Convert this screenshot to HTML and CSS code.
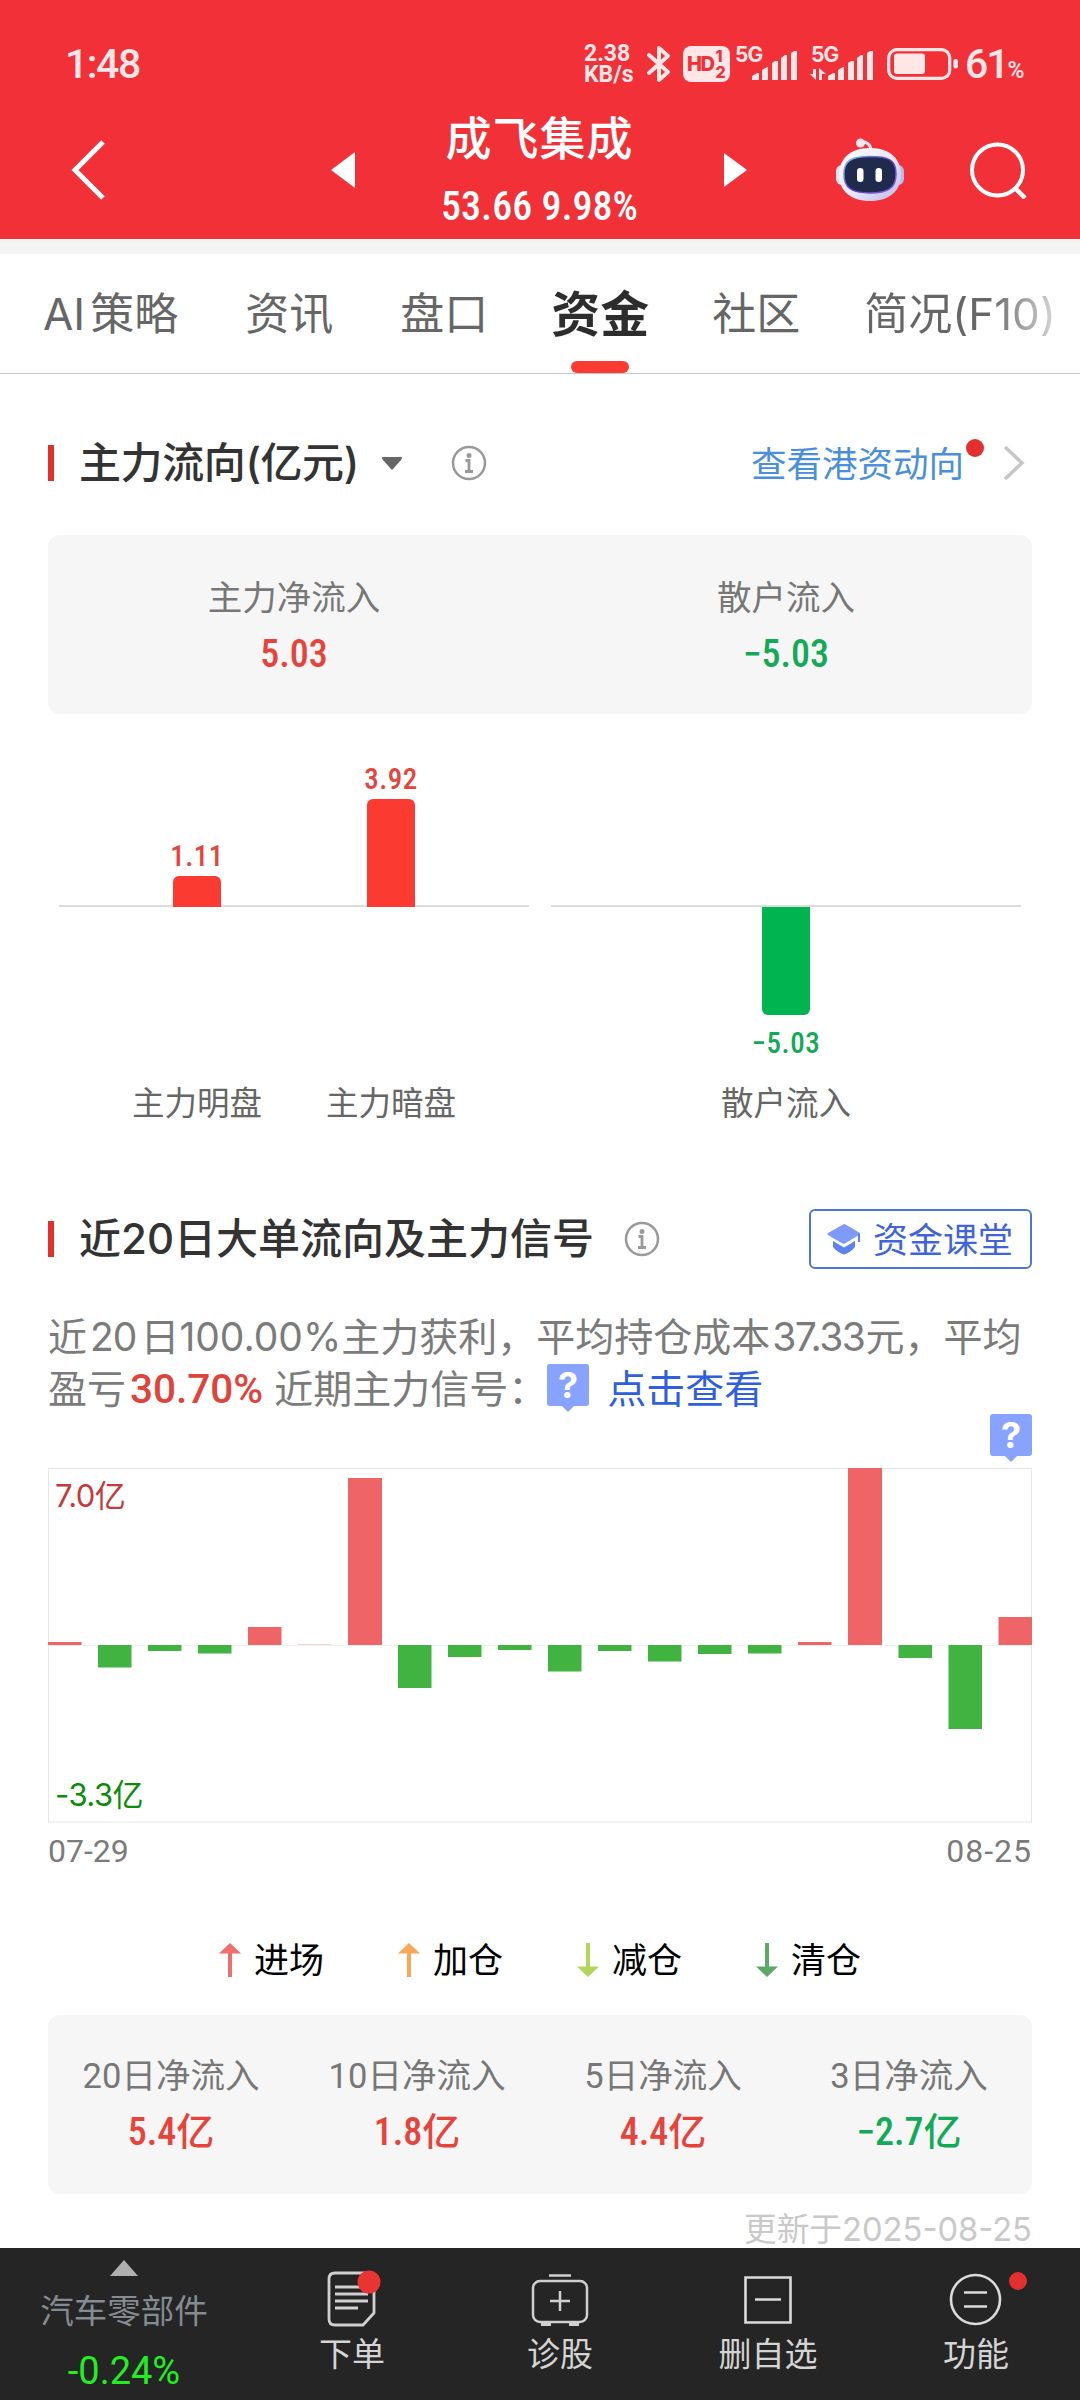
FILE: index.html
```html
<!DOCTYPE html>
<html lang="zh-CN">
<head>
    <meta charset="UTF-8">
    <meta name="viewport" content="width=device-width, initial-scale=1.0">
    <title>成飞集成 - 资金</title>
    <link rel="stylesheet" href="styles.css">
</head>
<body>
    <div class="page">
        <header class="header">
            <div class="status-bar">
                <span class="clock">1:48</span>
                <div class="net-speed"><span>2.38</span><span>KB/s</span></div>
                <svg class="bluetooth" width="26" height="40" viewBox="0 0 26 40" fill="none" stroke="#ffe6e7" stroke-width="4" stroke-linejoin="round" stroke-linecap="round"><path d="M3 11 L22 28 L13 36 V4 L22 12 L3 29"/></svg>
                <div class="hd"><b>HD</b><span class="hd-nums"><i>1</i><i>2</i></span></div>
                <svg class="signal" width="64" height="48" viewBox="0 -6 64 48" fill="#ffe6e7">
                    <text class="net-type" x="0" y="16">5G</text>
                    <path d="M17 34v-4l5-3h2v7zM27 34V24l5-3h1v13zM37 34V17l3-2h3v19zM46 34V12l4-3h2v25zM56 34V7l3-2h3v29z"/>
                </svg>
                <svg class="signal-data" width="64" height="48" viewBox="0 -6 64 48" fill="#ffe6e7">
                    <text class="net-type" x="1" y="16">5G</text>
                    <path d="M0 28 6 34V23H3v5zM9 34h3v-6h4l-7-6zM18 34v-4l5-3h2v7zM28 34V24l5-3h1v13zM38 34V17l3-2h3v19zM47 34V12l4-3h2v25zM57 34V7l3-2h3v29z"/>
                </svg>
                <svg class="battery" width="72" height="32" viewBox="0 0 72 32"><rect x="1.7" y="1.7" width="61" height="28.600" rx="8" fill="none" stroke="#ffe6e7" stroke-width="3.200"/><rect x="7" y="5.500" width="31" height="20.500" rx="3" fill="#ffe6e7"/><rect x="66.500" y="11" width="4.500" height="9.500" rx="2" fill="#ffe6e7"/></svg>
                <span class="percent">61<small>%</small></span>
            </div>
            <nav class="nav">
                <svg class="back" width="36" height="62" viewBox="0 0 36 62"><path d="M33 3 5 31 33 59" fill="none" stroke="#fff" stroke-width="5"/></svg>
                <svg class="prev" width="24" height="36" viewBox="0 0 24 36"><path d="M24 0v36L0 18z" fill="#fff"/></svg>
                <div class="stock">
                    <h1>成飞集成</h1>
                    <p class="num">53.66 9.98%</p>
                </div>
                <svg class="next" width="23" height="34" viewBox="0 0 23 34"><path d="M0 0v34l23-17z" fill="#fff"/></svg>
                <svg class="robot" width="70" height="66" viewBox="0 0 70 66">
                    <defs>
                        <linearGradient id="shell" x1="0" y1="0" x2="1" y2="1"><stop offset="0" stop-color="#fff"/><stop offset=".55" stop-color="#e9e6fb"/><stop offset="1" stop-color="#b9b5ea"/></linearGradient>
                        <linearGradient id="rim" x1="0" y1="0" x2="1" y2="1"><stop offset="0" stop-color="#7fc4e6"/><stop offset=".5" stop-color="#5a3ccc"/><stop offset="1" stop-color="#8a62ea"/></linearGradient>
                    </defs>
                    <path d="M25 5c7-1 11 3 11 9" fill="none" stroke="#f3e6f4" stroke-width="3"/>
                    <circle cx="25.500" cy="6" r="4.500" fill="#fbe5ec"/>
                    <rect x="1" y="28" width="12" height="20" rx="6" fill="#e2e0f8"/>
                    <rect x="57" y="28" width="12" height="20" rx="6" fill="#bbb8ea"/>
                    <path d="M35 11C55 11 66 22 66 38S54 64 35 64 4 54 4 38 15 11 35 11z" fill="url(#shell)"/>
                    <path d="M35 19.500c18 0 26 3 26 17.500S53 56 35 56 9 51 9 37s8-17.500 26-17.500z" fill="#1f2a4c" stroke="url(#rim)" stroke-width="1.500"/>
                    <rect x="22" y="31" width="6.500" height="14" rx="3.200" fill="#fff"/>
                    <rect x="40.500" y="31" width="6.500" height="14" rx="3.200" fill="#fff"/>
                </svg>
                <svg class="search" width="58" height="58" viewBox="0 0 58 58" fill="none" stroke="#fff" stroke-width="4"><circle cx="28.500" cy="29" r="25.500"/><path d="M45 46 56 57" stroke-width="4.500"/></svg>
            </nav>
        </header>

        <div class="tabs">
            <span><span class="latin">AI</span>策略</span>
            <span>资讯</span>
            <span>盘口</span>
            <span class="active">资金</span>
            <span>社区</span>
            <span class="faded">简况(F10)</span>
        </div>

        <main class="content">
            <section class="flow">
                <div class="section-head">
                    <h2>主力流向(亿元)</h2>
                    <svg class="caret" width="22" height="14" viewBox="0 0 22 14"><path d="M2 1h18q2 1 0 3l-8 9q-1 1-2 0L2 4Q0 2 2 1z" fill="#666"/></svg>
                    <svg class="info" width="36" height="36" viewBox="0 0 36 36"><circle cx="18" cy="18" r="16" fill="none" stroke="#999" stroke-width="2.500"/><circle cx="18" cy="10.500" r="2.500" fill="#999"/><path d="M14.500 15.500H18V26M14 26.500h8" fill="none" stroke="#999" stroke-width="2.800"/></svg>
                    <a class="hk-link">查看港资动向<i class="dot"></i></a>
                    <svg class="more" width="22" height="36" viewBox="0 0 22 36"><path d="M2 2 19 18 2 34" fill="none" stroke="#c6c6c6" stroke-width="3.500"/></svg>
                </div>

                <div class="card two">
                    <div><p>主力净流入</p><strong class="num red">5.03</strong></div>
                    <div><p>散户流入</p><strong class="num green">−5.03</strong></div>
                </div>

                <div class="bar-chart">
                    <div class="bar-group">
                        <div class="bar-item">
                            <div class="upper"><span class="num red">1.11</span><div class="bar up" style="height:31px"></div></div>
                            <div class="lower"></div>
                            <p>主力明盘</p>
                        </div>
                        <div class="bar-item">
                            <div class="upper"><span class="num red">3.92</span><div class="bar up" style="height:108px"></div></div>
                            <div class="lower"></div>
                            <p>主力暗盘</p>
                        </div>
                    </div>
                    <div class="bar-group">
                        <div class="bar-item">
                            <div class="upper"></div>
                            <div class="lower"><div class="bar down" style="height:108px"></div><span class="num green">−5.03</span></div>
                            <p>散户流入</p>
                        </div>
                    </div>
                </div>
            </section>

            <section class="signal-section">
                <div class="section-head">
                    <h2>近20日大单流向及主力信号</h2>
                    <svg class="info" width="36" height="36" viewBox="0 0 36 36"><circle cx="18" cy="18" r="16" fill="none" stroke="#999" stroke-width="2.500"/><circle cx="18" cy="10.500" r="2.500" fill="#999"/><path d="M14.500 15.500H18V26M14 26.500h8" fill="none" stroke="#999" stroke-width="2.800"/></svg>
                    <a class="course">
                        <svg width="34" height="32" viewBox="0 0 34 32"><path d="M17 1 Q18 1 33 10 Q34 11 32 12 L17 21 Q16 21 1 12 Q0 11 1 10z" fill="#7d9bf7"/><path d="M6 18 17 24.500 28 18V24q-5 6-11 7.500Q11 30 6 24z" fill="#5c82ee"/><path d="M32 11v8" stroke="#5c82ee" stroke-width="2"/></svg>
                        <span>资金课堂</span>
                    </a>
                </div>

                <p class="summary">
                    近<span class="days">20</span>日100.00%主力获利，平均持仓成本<span class="cost">37.33</span>元，平均<br>
                    盈亏<em>30.70%</em> 近期主力信号：<svg class="ask" width="42" height="48" viewBox="0 0 42 48"><path d="M3 0h36q3 0 3 3v36q0 3-3 3H27l-6 6-6-6H3q-3 0-3-3V3q0-3 3-3z" fill="#88a2ff"/><text x="21" y="34" text-anchor="middle">?</text></svg><a>点击查看</a>
                </p>

                <div class="pin"><svg class="ask" width="42" height="48" viewBox="0 0 42 48"><path d="M3 0h36q3 0 3 3v36q0 3-3 3H27l-6 6-6-6H3q-3 0-3-3V3q0-3 3-3z" fill="#88a2ff"/><text x="21" y="34" text-anchor="middle">?</text></svg></div>

                <svg class="history" width="984" height="355" viewBox="0 0 984 355">
                    <rect x=".5" y=".5" width="983" height="353.500" fill="none" stroke="#e6e6e6"/>
                    <path d="M0 177.500H984" stroke="#f0f0f0"/>
                    <g fill="#ef6466">
                        <rect x="0" y="174" width="33.500" height="3"/>
                        <rect x="200" y="159" width="33.500" height="18"/>
                        <rect x="250" y="176.500" width="33.500" height=".3"/>
                        <rect x="300" y="10" width="34" height="167"/>
                        <rect x="750" y="174" width="33.500" height="3"/>
                        <rect x="800" y="0" width="34" height="177"/>
                        <rect x="950.500" y="149" width="33.500" height="28"/>
                    </g>
                    <g fill="#41b341">
                        <rect x="50" y="177" width="33.500" height="22.500"/>
                        <rect x="100" y="177" width="33.500" height="6"/>
                        <rect x="150" y="177" width="33.500" height="8.500"/>
                        <rect x="350" y="177" width="33.500" height="43"/>
                        <rect x="400" y="177" width="33.500" height="12"/>
                        <rect x="450" y="177" width="33.500" height="5"/>
                        <rect x="500" y="177" width="33.500" height="26.500"/>
                        <rect x="550" y="177" width="33.500" height="6"/>
                        <rect x="600" y="177" width="33.500" height="16.500"/>
                        <rect x="650" y="177" width="33.500" height="9"/>
                        <rect x="700" y="177" width="33.500" height="8.500"/>
                        <rect x="850.500" y="177" width="33.500" height="13"/>
                        <rect x="900.500" y="177" width="33.500" height="84"/>
                    </g>
                    <text class="max" x="7" y="39">7.0亿</text>
                    <text class="min" x="7" y="338">-3.3亿</text>
                </svg>
                <div class="dates"><span>07-29</span><span class="date-end">08-25</span></div>

                <div class="legend">
                    <span><svg width="22" height="34" viewBox="0 0 22 34"><path d="M11 0 22 10.500H13V34H9V10.500H0z" fill="#ef6e6e"/></svg>进场</span>
                    <span><svg width="22" height="34" viewBox="0 0 22 34"><path d="M11 0 22 10.500H13V34H9V10.500H0z" fill="#fba75a"/></svg>加仓</span>
                    <span><svg width="22" height="34" viewBox="0 0 22 34"><path d="M11 34 22 23.500H13V0H9V23.500H0z" fill="#b0d75c"/></svg>减仓</span>
                    <span><svg width="22" height="34" viewBox="0 0 22 34"><path d="M11 34 22 23.500H13V0H9V23.500H0z" fill="#5da865"/></svg>清仓</span>
                </div>

                <div class="card four">
                    <div><p>20日净流入</p><strong class="num red">5.4亿</strong></div>
                    <div><p>10日净流入</p><strong class="num red">1.8亿</strong></div>
                    <div><p>5日净流入</p><strong class="num red">4.4亿</strong></div>
                    <div><p>3日净流入</p><strong class="num green">−2.7亿</strong></div>
                </div>
                <p class="updated">更新于2025-08-25</p>
            </section>
        </main>

        <footer class="footer">
            <div class="sector">
                <svg width="28" height="16" viewBox="0 0 28 16"><path d="M14 0 28 16H0z" fill="#b0b0b0"/></svg>
                <span class="sector-name">汽车零部件</span>
                <span class="sector-rate">-0.24%</span>
            </div>
            <div class="action">
                <svg width="60" height="58" viewBox="0 0 60 58" fill="none" stroke="#d0d0d0" stroke-width="2.800"><path d="M13 3h35q4 0 4 4v36L41 55H13q-6 0-6-6V9q0-6 6-6zM13 17h28M13 24h33M13 31h33M13 38h23"/><circle cx="47" cy="12" r="11.500" fill="#e93434" stroke="none"/></svg>
                <span>下单</span>
            </div>
            <div class="action">
                <svg width="60" height="58" viewBox="0 0 60 58" fill="none" stroke="#d0d0d0" stroke-width="2.500"><rect x="3" y="11" width="54" height="41" rx="7"/><path d="M19 5.500h22M30 21v20M20 31h20"/><path d="M11 54h10M39 54h10" stroke-width="4"/></svg>
                <span>诊股</span>
            </div>
            <div class="action">
                <svg width="60" height="58" viewBox="0 0 60 58" fill="none" stroke="#dadada" stroke-width="2.600"><path d="M7.500 7.500h45v45h-45zM17 29.500h26"/></svg>
                <span>删自选</span>
            </div>
            <div class="action">
                <svg width="60" height="58" viewBox="0 0 60 58" fill="none" stroke="#dadada" stroke-width="2.600"><circle cx="29.500" cy="29.500" r="24.500"/><path d="M18 22.500h23M18 36.500h23"/></svg>
                <span>功能</span>
                <i class="dot"></i>
            </div>
        </footer>
    </div>
</body>
</html>
```

FILE: styles.css
```css
* {
    box-sizing: border-box;
    margin: 0;
    padding: 0;
}

body {
    font-family: 'Inter', 'Noto Sans CJK SC', sans-serif;
    background-color: #fff;
    color: #333;
}

svg {
    display: block;
    flex-shrink: 0;
}

i, em {
    font-style: normal;
}

.page {
    width: 1080px;
    height: 2400px;
    display: flex;
    flex-direction: column;
    overflow: hidden;
    white-space: nowrap;
}

.num {
    font-family: 'Roboto', 'Noto Sans CJK SC', sans-serif;
    font-stretch: 85%;
    font-weight: 500;
}

.red {
    color: #e8433b;
}

.green {
    color: #12aa57;
}

/* 顶部 */
.header {
    height: 239px;
    background-color: #f23037;
    color: #fff;
}

.status-bar {
    display: flex;
    align-items: center;
    height: 96px;
    padding: 32px 0 0 65px;
    color: #ffe6e7;
}

.clock {
    width: 519px;
    font-family: 'Roboto', sans-serif;
    font-size: 41px;
    font-weight: 500;
    letter-spacing: -1.5px;
}

.net-speed {
    display: flex;
    flex-direction: column;
    width: 62px;
    font-family: 'Roboto', sans-serif;
    font-size: 23px;
    line-height: 21px;
    font-weight: 700;
}

.hd {
    display: flex;
    align-items: center;
    width: 47px;
    height: 36px;
    margin-left: 11px;
    padding-left: 4px;
    border-radius: 8px;
    background-color: #ffe6e7;
    color: #f23037;
    font-size: 20px;
    letter-spacing: -1.5px;
}

.hd b {
    font-weight: 800;
}

.hd-nums {
    display: flex;
    flex-direction: column;
    margin-left: 2px;
    font-size: 16px;
    line-height: 16px;
    font-weight: 800;
}

.signal {
    margin-left: 5px;
}

.signal-data {
    margin-left: 11px;
}

.net-type {
    font-size: 21px;
    font-weight: 700;
    letter-spacing: -1px;
}

.battery {
    margin-left: 13px;
}

.percent {
    margin-left: 6px;
    font-family: 'Roboto', sans-serif;
    font-size: 41px;
    font-weight: 500;
    letter-spacing: -2px;
}

.percent small {
    font-size: 23px;
}

.nav {
    display: flex;
    align-items: center;
    height: 143px;
    padding: 4px 0 0 70px;
}

.prev {
    margin-left: 225px;
}

.stock {
    width: 369px;
    text-align: center;
    padding-top: 6px;
}

.stock h1 {
    font-size: 46px;
    line-height: 68px;
    font-weight: 500;
    letter-spacing: 1px;
}

.stock p {
    font-size: 40px;
    line-height: 70px;
}

.robot {
    margin-left: 88px;
}

.search {
    margin-left: 64px;
}

/* 标签栏 */
.tabs {
    display: flex;
    align-items: center;
    height: 135px;
    padding: 0 0 6px 43px;
    border-top: 15px solid #f4f4f4;
    border-bottom: 1px solid #c8c8c8;
    font-size: 44px;
    color: #666;
    gap: 67px;
}

.latin {
    margin-right: 5px;
}

.tabs .active {
    position: relative;
    margin: 0 -4px;
    font-size: 49px;
    font-weight: 700;
    color: #2d2d2d;
}

.tabs .active::after {
    content: "";
    position: absolute;
    left: 50%;
    bottom: -27px;
    width: 58px;
    height: 12px;
    margin-left: -29px;
    border-radius: 6px;
    background-color: #fb3b31;
}

.tabs .faded {
    margin-left: -3px;
    background: linear-gradient(90deg, #666 65%, #d8d8d8 100%);
    -webkit-background-clip: text;
    background-clip: text;
    color: transparent;
}

/* 内容 */
.content {
    height: 1874px;
    padding: 58px 48px 0;
}

.section-head {
    display: flex;
    align-items: center;
    height: 62px;
}

.section-head::before {
    content: "";
    width: 6px;
    height: 36px;
    background-color: #e3302d;
}

.section-head h2 {
    margin-left: 25px;
    font-size: 42px;
    line-height: 60px;
    font-weight: 500;
}

.flow h2 {
    letter-spacing: -0.4px;
}

.caret {
    margin-left: 22px;
}

.flow .info {
    margin-left: 48px;
}

.hk-link {
    position: relative;
    margin-left: auto;
    padding-bottom: 3px;
    font-size: 35.5px;
    color: #4a8fdb;
}

.dot {
    position: absolute;
    width: 18px;
    height: 18px;
    border-radius: 50%;
    background-color: #e22f2f;
}

.hk-link .dot {
    right: -20px;
    top: 3px;
}

.more {
    margin: 0 7px 0 39px;
}

.card {
    display: grid;
    height: 179px;
    padding-top: 35px;
    border-radius: 12px;
    background-color: #f6f6f6;
    text-align: center;
    font-size: 34.5px;
    color: #777;
}

.card p {
    line-height: 56px;
}

.card strong {
    display: block;
    font-size: 38px;
    line-height: 56px;
}

.two {
    grid-template-columns: 1fr 1fr;
    margin-top: 41px;
}

.four {
    grid-template-columns: repeat(4, 1fr);
    margin-top: 30px;
    padding-top: 33px;
}

.four p {
    font-family: 'Roboto', 'Noto Sans CJK SC', sans-serif;
}

.bar-chart {
    display: flex;
    justify-content: space-between;
    height: 430px;
    padding: 0 11px;
}

.bar-group {
    display: flex;
    justify-content: center;
    gap: 66px;
    width: 470px;
    height: 193px;
    border-bottom: 2px solid #dcdcdc;
}

.bar-item {
    width: 128px;
    text-align: center;
    font-size: 32.5px;
    color: #666;
}

.bar-item p {
    margin-left: -1px;
}

.upper {
    display: flex;
    flex-direction: column;
    justify-content: flex-end;
    align-items: center;
    height: 193px;
}

.lower {
    display: flex;
    flex-direction: column;
    align-items: center;
    height: 170px;
}

.bar-item .num {
    font-size: 29px;
    line-height: 39px;
    letter-spacing: 0.5px;
}

.lower .num {
    padding-top: 9px;
}

.bar {
    width: 48px;
    flex-shrink: 0;
}

.up {
    border-radius: 6px 6px 0 0;
    background-color: #fb3b31;
}

.down {
    border-radius: 0 0 6px 6px;
    background-color: #00b550;
}

.signal-section .section-head {
    margin-top: 64px;
}

.signal-section .info {
    margin-left: 30px;
}

.course {
    display: flex;
    align-items: center;
    gap: 12px;
    width: 223px;
    height: 60px;
    margin-left: auto;
    padding-left: 16px;
    border: 2px solid #4f74d6;
    border-radius: 6px;
    font-size: 35px;
    color: #4065d8;
}

.course span {
    padding-bottom: 4px;
}

.summary {
    height: 103px;
    margin-top: 41px;
    font-size: 39px;
    line-height: 51.5px;
    color: #7b7b7b;
}

.days {
    margin: 0 4px 0 3px;
    letter-spacing: -1px;
}

.cost {
    margin: 0 1px 0 2px;
    letter-spacing: -1.5px;
}

.summary em {
    margin-left: 4px;
    font-family: 'Roboto', sans-serif;
    font-size: 40.5px;
    color: #e0433b;
    font-weight: 500;
}

.summary .ask {
    display: inline-block;
    vertical-align: -9px;
    margin: 0 18px 0 0;
}

.summary a {
    color: #305fdd;
}

.ask text {
    font-size: 36px;
    font-weight: 700;
    fill: #fff;
}

.pin {
    display: flex;
    justify-content: flex-end;
    height: 54px;
}

.history text {
    font-size: 31px;
    letter-spacing: -0.5px;
}

.history .max {
    fill: #c5393a;
}

.history .min {
    fill: #0c8c0c;
}

.dates {
    display: flex;
    justify-content: space-between;
    font-family: 'Roboto', sans-serif;
    font-size: 32px;
    line-height: 56px;
    color: #7b7b7b;
}

.date-end {
    letter-spacing: 1px;
}

.legend {
    display: flex;
    justify-content: center;
    gap: 74px;
    height: 50px;
    margin-top: 56px;
    font-size: 35px;
    line-height: 50px;
    color: #000;
}

.legend span {
    display: flex;
    align-items: center;
    gap: 13px;
}

.updated {
    font-size: 32.7px;
    line-height: 70px;
    text-align: right;
    color: #c9c9c9;
}

/* 底部 */
.footer {
    display: flex;
    height: 152px;
    background-color: #252525;
}

.sector {
    display: flex;
    flex-direction: column;
    align-items: center;
    width: 248px;
    padding-top: 12px;
}

.sector-name {
    margin-top: 7px;
    font-size: 33.5px;
    line-height: 56px;
    color: #868b92;
}

.sector-rate {
    font-family: 'Roboto', sans-serif;
    font-size: 38px;
    line-height: 64px;
    color: #22ee22;
}

.action {
    position: relative;
    display: flex;
    flex-direction: column;
    align-items: center;
    width: 208px;
    padding-top: 22px;
    font-size: 33px;
    line-height: 52px;
    color: #d4d4d4;
}

.action .dot {
    top: 24px;
    right: 53px;
}
```
